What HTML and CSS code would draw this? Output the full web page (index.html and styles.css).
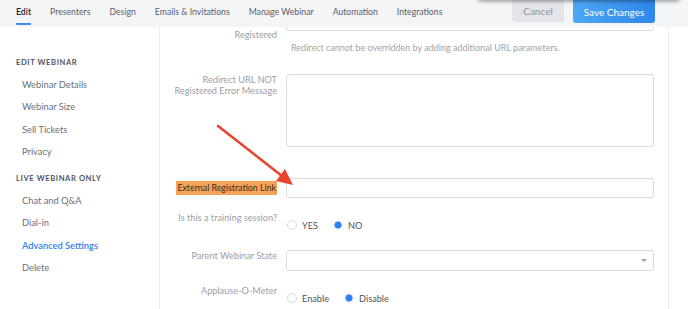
FILE: index.html
```html
<!DOCTYPE html>
<html lang="en">
<head>
    <meta charset="UTF-8">
    <meta name="viewport" content="width=device-width, initial-scale=1.0">
    <title>Edit Webinar - Advanced Settings</title>
    <link rel="stylesheet" href="styles.css">
</head>
<body>
    <header class="topbar">
        <nav class="tabs">
            <a class="tab active">Edit</a>
            <a class="tab">Presenters</a>
            <a class="tab">Design</a>
            <a class="tab">Emails &amp; Invitations</a>
            <a class="tab">Manage Webinar</a>
            <a class="tab">Automation</a>
            <a class="tab">Integrations</a>
        </nav>
        <div class="actions">
            <button class="btn btn-cancel">Cancel</button>
            <button class="btn btn-save">Save Changes</button>
        </div>
        <div class="popover-edge"></div>
    </header>

    <div class="layout">
        <aside class="sidebar">
            <div class="side-heading">EDIT WEBINAR</div>
            <a class="side-link">Webinar Details</a>
            <a class="side-link">Webinar Size</a>
            <a class="side-link">Sell Tickets</a>
            <a class="side-link">Privacy</a>
            <div class="side-heading second">LIVE WEBINAR ONLY</div>
            <a class="side-link">Chat and Q&amp;A</a>
            <a class="side-link">Dial-in</a>
            <a class="side-link active">Advanced Settings</a>
            <a class="side-link">Delete</a>
        </aside>

        <main class="content">
            <div class="form">
                <div class="row row-redirect">
                    <label class="field-label">Redirect URL If<br>Registered</label>
                    <div class="field">
                        <div class="input"></div>
                        <p class="help">Redirect cannot be overridden by adding additional URL parameters.</p>
                    </div>
                </div>

                <div class="row row-error">
                    <label class="field-label">Redirect URL NOT<br>Registered Error Message</label>
                    <div class="field">
                        <div class="textarea"></div>
                    </div>
                </div>

                <div class="row row-external">
                    <label class="field-label"><span class="highlight">External Registration Link</span></label>
                    <div class="field">
                        <div class="input"></div>
                    </div>
                </div>

                <div class="row row-training">
                    <label class="field-label">Is this a training session?</label>
                    <div class="field radios">
                        <span class="radio-option"><span class="radio"></span>YES</span>
                        <span class="radio-option"><span class="radio checked"></span>NO</span>
                    </div>
                </div>

                <div class="row row-parent">
                    <label class="field-label">Parent Webinar State</label>
                    <div class="field">
                        <div class="input select"><span class="caret"></span></div>
                    </div>
                </div>

                <div class="row row-applause">
                    <label class="field-label">Applause-O-Meter</label>
                    <div class="field radios">
                        <span class="radio-option"><span class="radio"></span>Enable</span>
                        <span class="radio-option"><span class="radio checked"></span>Disable</span>
                    </div>
                </div>
            </div>
        </main>

        <div class="gutter"></div>
    </div>

    <svg class="arrow" width="688" height="309" viewBox="0 0 688 309">
        <line x1="218" y1="126" x2="282" y2="176" stroke="#e8442e" stroke-width="2.6" stroke-linecap="round"/>
        <polygon points="293,185 276,181 285,169" fill="#e8442e"/>
    </svg>
</body>
</html>
```

FILE: styles.css
```css
body {
    margin: 0;
    width: 688px;
    height: 309px;
    overflow: hidden;
    position: relative;
    font-family: Lato, 'Noto Sans', sans-serif;
    font-size: 9.2px;
    color: #555a63;
    background-color: #fff;
}
.topbar {
    position: relative;
    z-index: 2;
    display: flex;
    align-items: flex-start;
    height: 27px;
    padding: 0 33px 0 16px;
    background-color: #f4f5f7;
}
.tabs {
    display: flex;
    gap: 19px;
}
.tab {
    height: 25px;
    line-height: 23px;
    font-size: 8.7px;
    color: #5b606b;
    box-sizing: border-box;
}
.tab.active {
    color: #1e2330;
    font-weight: 600;
    border-bottom: 2px solid #3a8ef0;
    border-radius: 0 0 1px 1px;
}
.actions {
    margin-left: auto;
    display: flex;
    gap: 9px;
}
.btn {
    border: none;
    border-radius: 0 0 3px 3px;
    font-family: inherit;
    font-size: 10px;
    height: 22px;
    padding: 0;
}
.btn-cancel {
    width: 52px;
    background-color: #e3e5e8;
    color: #8d919a;
}
.btn-save {
    width: 82px;
    height: 23px;
    background: linear-gradient(90deg, #4ca7f5, #2f86ea);
    color: #fff;
}
.popover-edge {
    position: absolute;
    top: -8px;
    left: 478px;
    width: 202px;
    height: 8px;
    background-color: #eee;
    border-radius: 0 0 4px 4px;
    box-shadow: 0 1px 4px rgba(0,0,0,0.45);
}
.layout {
    display: flex;
    height: 282px;
}
.sidebar {
    width: 159px;
    flex-shrink: 0;
    border-right: 1px solid #ececec;
    padding-top: 24px;
    display: flex;
    flex-direction: column;
}
.side-heading {
    padding-left: 16px;
    line-height: 22.6px;
    font-size: 7.6px;
    font-weight: 700;
    letter-spacing: 0.6px;
    color: #4f5666;
}
.side-heading.second {
    margin-top: 3px;
}
.side-link {
    padding-left: 22px;
    line-height: 22.6px;
    font-size: 9.3px;
    color: #6b707a;
}
.side-link.active {
    color: #2f80ed;
    font-weight: 600;
}
.content {
    width: 508px;
    flex-shrink: 0;
    border-right: 1px solid #ececec;
}
.gutter {
    flex: 1;
}
.form {
    margin-top: -17px;
}
.row {
    display: grid;
    grid-template-columns: 117px 368px;
    column-gap: 9px;
    align-items: start;
}
.field-label {
    text-align: right;
    line-height: 11px;
    color: #9a9ea6;
}
.input, .textarea {
    box-sizing: border-box;
    border: 1px solid #dedede;
    border-radius: 2px;
    background-color: #fff;
    box-shadow: inset 0 1px 1px rgba(0,0,0,0.03);
}
.input {
    height: 21px;
}
.textarea {
    height: 73px;
}
.help {
    margin: 11px 0 0 5px;
    line-height: 11px;
    font-size: 9px;
    color: #a0a3a8;
}
.row-redirect .field-label {
    padding-top: 7px;
    line-height: 12px;
}
.row-error {
    margin-top: 21px;
}
.row-external {
    margin-top: 31px;
}
.row-external .input {
    height: 20px;
}
.row-external .field-label {
    padding-top: 3px;
}
.highlight {
    display: inline-block;
    line-height: 14px;
    padding: 0 1px;
    background-color: #f4a35a;
    color: #3a2c20;
    font-size: 8.8px;
}
.row-training {
    margin-top: 14px;
}
.radios {
    display: flex;
    gap: 15px;
    padding-left: 1px;
    margin-top: 6px;
    height: 14px;
    align-items: center;
}
.radio-option {
    display: inline-flex;
    align-items: center;
    gap: 5px;
    color: #50555e;
}
.radio {
    width: 10px;
    height: 10px;
    box-sizing: border-box;
    border-radius: 50%;
    border: 1px solid #d6d9dd;
    background-color: #fff;
}
.radio.checked {
    border-color: #eef2f9;
    background: radial-gradient(circle, #2e7ff0 0 3.3px, #fff 3.9px);
}
.row-parent {
    margin-top: 18px;
}
.select {
    display: flex;
    align-items: center;
    justify-content: flex-end;
    padding-right: 6px;
}
.caret {
    width: 0;
    height: 0;
    border-left: 3px solid transparent;
    border-right: 3px solid transparent;
    border-top: 3px solid #a2a5aa;
}
.row-applause {
    margin-top: 14px;
}
.arrow {
    position: absolute;
    top: 0;
    left: 0;
    pointer-events: none;
    z-index: 3;
}
```
